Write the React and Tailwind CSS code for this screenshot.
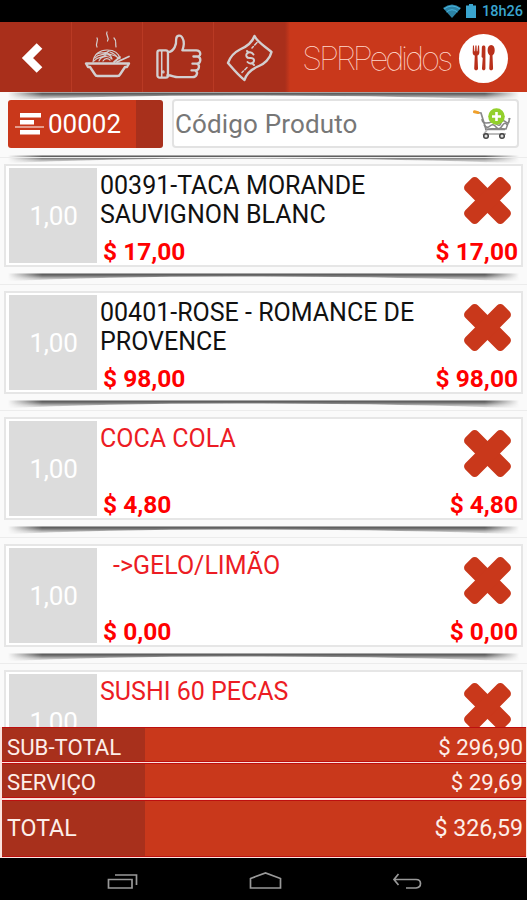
import React from 'react';

const items = [
  { name: '00391-TACA MORANDE SAUVIGNON BLANC', qty: '1,00', price: '$ 17,00', total: '$ 17,00' },
  { name: '00401-ROSE - ROMANCE DE PROVENCE', qty: '1,00', price: '$ 98,00', total: '$ 98,00' },
  { name: 'COCA COLA', qty: '1,00', price: '$ 4,80', total: '$ 4,80', extra: true },
  { name: '->GELO/LIMÃO', qty: '1,00', price: '$ 0,00', total: '$ 0,00', extra: true, child: true },
  { name: 'SUSHI 60 PECAS', qty: '1,00', extra: true },
];

function LiftedShadow({ id }) {
  return (
    <svg className="block h-[10px] w-full shrink-0" viewBox="0 0 527 10" preserveAspectRatio="none">
      <defs>
        <linearGradient id={`${id}-v`} x1="0" y1="0" x2="0" y2="9" gradientUnits="userSpaceOnUse">
          <stop offset="0" stopColor="#333" stopOpacity="0.85" />
          <stop offset="0.25" stopColor="#333" stopOpacity="0.75" />
          <stop offset="0.6" stopColor="#444" stopOpacity="0.35" />
          <stop offset="1" stopColor="#555" stopOpacity="0" />
        </linearGradient>
        <linearGradient id={`${id}-h`}>
          <stop offset="0.015" stopColor="#000" />
          <stop offset="0.08" stopColor="#fff" />
          <stop offset="0.92" stopColor="#fff" />
          <stop offset="0.985" stopColor="#000" />
        </linearGradient>
        <mask id={`${id}-m`}>
          <rect width="527" height="10" fill={`url(#${id}-h)`} />
        </mask>
        <filter id={`${id}-b`} x="-5%" y="-20%" width="110%" height="150%">
          <feGaussianBlur stdDeviation="1 0.6" />
        </filter>
      </defs>
      <g mask={`url(#${id}-m)`}>
        <path d="M5 0.5H522V8.500Q420 4 263 3.500T5 8.500Z" fill={`url(#${id}-v)`} filter={`url(#${id}-b)`} />
      </g>
    </svg>
  );
}

function NoodlesIcon() {
  return (
    <svg className="h-[50px] w-[48px]" viewBox="0 0 48 50" fill="none" stroke="#d3cfd0" strokeLinecap="round" strokeLinejoin="round">
      <g strokeWidth="1.200">
        <path d="M14 9c2 2-2 5 0 9M24 3c-2 3 3 5 .5 9M31 9c3 3 1 5 2 9" />
        <path d="M10 33c1-8 7-12 14-12s12 3 13 9" />
        <path d="M12 29c4-5 8-2 12-5 4 3 8 1 11 5M11 32c4-5 8-3 10-5 4-3 7-1 8 3M16 32c2-5 9-6 13-2M20 32c2-3 5-3 7-1M14 25c5-3 8 1 12-3M27 23c3 1 6 3 8 6" />
      </g>
      <path d="M3 34.500H46L44 38H42L37 45.500Q36.400 47 34.500 47H14.500Q12.600 47 12 45.500L7 38H5Z" strokeWidth="2.400" />
      <path d="M34 33L46 27.500M31 33L37 28" strokeWidth="1.800" />
    </svg>
  );
}

function ThumbIcon() {
  return (
    <svg className="h-[48px] w-[48px]" viewBox="0 0 50 48" fill="none" stroke="#d3cfd0" strokeWidth="2.400" strokeLinecap="round" strokeLinejoin="round">
      <path d="M14 19C20 18 22.500 11 22 6C22 1 27 0 29 5C31 9 30 13 28.500 17H43C48 17 48.500 23 44.500 23.500H40M44.500 23.500C48.500 24.500 48 31 43.500 31H39M43.500 31C47 32 46.500 38 42 38H38M42 38C45.500 40 43.500 45 39 45H24C20 45 18 43 13 43" />
      <rect x="2.500" y="17" width="11" height="28.500" rx="2.200" />
      <path d="M7 18V45" strokeWidth="1.600" />
      <circle cx="8.500" cy="39.500" r="1" strokeWidth="1.200" />
    </svg>
  );
}

function MoneyIcon() {
  return (
    <svg className="h-[48px] w-[48px]" viewBox="0 0 48 48" fill="none" stroke="#d3cfd0" strokeLinecap="round" strokeLinejoin="round">
      <path d="M28.500 2C32 9 39 12 45.500 18C44 25 38 30 33 32C27 34.500 21 38 18.500 46C13 42 8 36 2 29C4 23 9 18 14 15.500C21 12.500 26 9 28.500 2Z" strokeWidth="2.400" />
      <path d="M27.500 20.500C25 16.500 19 18.500 20.500 22.500C22 26 27 22 28 26C28.500 29.500 23.500 30.500 21.500 28M21 17L22.500 18.500M26.500 29.500L28 31" strokeWidth="2" />
      <path d="M26 14L31 8.500M16 38.500L21 33.500" strokeWidth="1.500" strokeDasharray="2 2 4 1" />
    </svg>
  );
}

function Cutlery() {
  return (
    <svg className="h-[28px] w-[23px]" viewBox="0 0 24 28" fill="#b9301b">
      <path d="M1 1h1l.5 6h.7L3.500 1h1.200L5 7h.7L6.300 1h1.100l.3 7c0 2.200-1 3-2 3.500L6.300 25c0 2.500-4 2.500-4 0l.6-13.500C1.600 11 .6 10 .7 8Z" />
      <path d="M10.300 2.500C10.300.5 14 0 14 3V25c0 2.500-3.600 2.500-3.600 0l.8-11-1.200-1Z" />
      <path d="M20 .5c2.500 0 3.700 2.500 3.700 5.500 0 2.800-1 4.500-2.300 5.300L22 25c0 2.500-4 2.500-4 0l.6-13.700C17.300 10.500 16.300 8.800 16.300 6c0-3 1.200-5.500 3.700-5.500Z" />
    </svg>
  );
}

function CartIcon() {
  return (
    <svg className="h-[32px] w-[40px]" viewBox="0 0 40 32" fill="none">
      <path d="M4 4.500L8 5L13 21.500H32" stroke="#8a8a8a" strokeWidth="1.700" />
      <path d="M9 11Q9 15 13 15T18 14T23 16T28 15T33 14T36 10M11 17Q14 21 17 18T23 19T29 18T34 17M12 21.500Q23 20 33 21L37 10" stroke="#858585" strokeWidth="1.500" />
      <path d="M14 22L11 26H33" stroke="#bbb" strokeWidth="1.800" />
      <path d="M1.500 3.800L5 4.600" stroke="#f0a02a" strokeWidth="3" strokeLinecap="round" />
      <circle cx="13" cy="28" r="2.300" fill="#ddd" stroke="#444" strokeWidth="1.500" />
      <circle cx="29" cy="28" r="2.300" fill="#ddd" stroke="#444" strokeWidth="1.500" />
      <circle cx="23.500" cy="8.500" r="8.300" fill="#93d02c" />
      <path d="M23.500 4V13M19 8.500H28" stroke="#fff" strokeWidth="2.600" />
    </svg>
  );
}

function RemoveIcon() {
  return (
    <svg className="h-[47px] w-[47px]" viewBox="0 0 48 48" fill="#c9381b">
      <rect x="-3.500" y="15" width="55" height="18" rx="4.500" transform="rotate(45 24 24)" />
      <rect x="-3.500" y="15" width="55" height="18" rx="4.500" transform="rotate(-45 24 24)" />
    </svg>
  );
}

function OrderItem({ item, index }) {
  return (
    <div className="h-[126.5px] shrink-0 border-t border-[#ececec] pt-[6px]">
      <div className="mx-[4px] flex h-[103px] border-2 border-[#e6e6e6] bg-white py-[2px] pl-[3px] pr-[3px]">
        <div className="flex h-[95px] w-[88px] shrink-0 items-center justify-center bg-[#dcdcdc] pl-px pt-[2px] text-[26px] tracking-[-0.2px] text-white">
          {item.qty}
        </div>
        <div className={item.extra ? 'flex flex-1 flex-col pl-[3px] text-[#ec1c24]' : 'flex flex-1 flex-col pl-[3px] text-[#111]'}>
          <div className="flex h-[69px] shrink-0 justify-between">
            <div className={item.child ? 'w-[330px] pl-[13px] pt-[3px] text-[25px] leading-[29px]' : 'w-[330px] pt-[3px] text-[25px] leading-[29px]'}>
              {item.name}
            </div>
            <div className="mr-[7px] pt-[9px]">
              <RemoveIcon />
            </div>
          </div>
          {item.price && (
            <div className="flex shrink-0 justify-between pl-[3px] text-[24.5px] font-bold leading-[29px] text-[#ff0000]">
              <span>{item.price}</span>
              <span>{item.total}</span>
            </div>
          )}
        </div>
      </div>
      <div className="pt-[6px]">
        <LiftedShadow id={`item${index}`} />
      </div>
    </div>
  );
}

function TotalRow({ label, value, className }) {
  return (
    <div className={`flex items-center justify-between border-y border-[#bd0f0f] bg-linear-to-r from-[#a8301c] from-[143.5px] to-[#c9381b] to-[143.5px] pl-[5px] pr-[3px] leading-[24px] text-[#fdeee9] ${className}`}>
      <span>{label}</span>
      <span>{value}</span>
    </div>
  );
}

export default function App() {
  return (
    <div className="flex h-[900px] w-[527px] flex-col overflow-hidden bg-[#fafafa] font-['Roboto',sans-serif]">
      <div className="flex h-[22px] shrink-0 items-center justify-end bg-black pr-[4px] text-[#3aa5cf]">
        <svg className="h-[14px] w-[18px]" viewBox="0 0 18 14">
          <path d="M0 4Q9-3 18 4L9 14Z" fill="#2c83a6" />
          <path d="M3.500 8Q9 3.500 14.500 8M1 5Q9-1 17 5" fill="none" stroke="#49b5de" strokeWidth="1" />
        </svg>
        <svg className="ml-[5px] h-[14px] w-[10px]" viewBox="0 0 10 14" fill="#3aa5cf">
          <path d="M3 0h4v1.500h3V14H0V1.500h3Z" />
        </svg>
        <span className="ml-[6px] pt-px text-[14.5px] font-medium">18h26</span>
      </div>

      <div className="flex h-[70px] shrink-0 bg-[#c9381b]">
        <div className="flex w-[285px] bg-[#a92f1b]">
          <div className="flex w-[72px] items-center justify-center border-r border-[#b93a24] pr-[5px] pt-[2px]">
            <svg className="h-[34px] w-[24px]" viewBox="0 0 24 34" fill="none">
              <path d="M18.500 5L6.500 17L18.500 29" stroke="#fff" strokeWidth="8" strokeLinejoin="miter" />
            </svg>
          </div>
          <div className="flex w-[71px] items-start justify-center border-r border-[#b93a24] pr-px pt-[7px]"><NoodlesIcon /></div>
          <div className="flex w-[71px] items-start justify-center border-r border-[#b93a24] pl-px pt-[11px]"><ThumbIcon /></div>
          <div className="flex w-[71px] items-start justify-center pt-[12px]"><MoneyIcon /></div>
        </div>
        <div className="flex flex-1 items-center justify-end bg-linear-to-r from-[#a92f1b] from-0% to-[#c9381b] to-[5px] pr-[19px]">
          <span className="mr-[9px] mt-[3px] whitespace-nowrap font-['Inter',sans-serif] text-[33px] font-thin tracking-[-3.2px] text-[#ffd9cc]">SPRPedidos</span>
          <div className="mt-[2px] flex h-[49px] w-[49px] shrink-0 items-center justify-center rounded-full bg-white"><Cutlery /></div>
        </div>
      </div>

      <div className="h-[65px] shrink-0">
        <LiftedShadow id="header" />
        <div className="-mt-[3px] flex h-[49px] gap-[9px] pl-[8px] pr-[8px]">
          <div className="mt-px flex h-[48px] w-[155px] items-center rounded-[3px] bg-linear-to-r from-[#c9381b] from-[128px] to-[#a8301c] to-[128px] pl-[6px] text-[26px] text-white">
            <svg className="mr-[3px] h-[24px] w-[31px]" viewBox="0 0 31 24" fill="#fff">
              <rect x="6" y="1" width="21" height="4.500" />
              <rect x="6" y="8" width="14" height="4.500" />
              <rect x="1" y="14.500" width="29" height="1" />
              <rect x="6" y="18" width="20" height="4.500" />
            </svg>
            <span className="pt-px">00002</span>
          </div>
          <div className="flex flex-1 items-center justify-between rounded-[4px] border-2 border-[#e2e2e2] bg-white pl-px pr-[4px] text-[26px] text-[#777]">
            <span className="pt-[2px] tracking-[0.15px]">Código Produto</span>
            <CartIcon />
          </div>
        </div>
        <div className="pt-[7px]"><LiftedShadow id="search" /></div>
      </div>

      <div className="flex h-[570px] shrink-0 flex-col overflow-hidden">
        {items.map((item, i) => <OrderItem key={item.name} item={item} index={i} />)}
      </div>

      <div className="flex h-[131px] shrink-0 flex-col bg-[#fbe4df] pl-[2px] pr-px">
        <TotalRow label="SUB-TOTAL" value="$ 296,90" className="h-[35px] pt-[5px] text-[22.2px]" />
        <TotalRow label="SERVIÇO" value="$ 29,69" className="mt-px h-[35px] pt-[3px] text-[22.2px]" />
        <TotalRow label="TOTAL" value="$ 326,59" className="mt-[2px] h-[57px] pb-[2px] text-[23.2px]" />
      </div>

      <div className="flex h-[42px] shrink-0 justify-between bg-black pl-[107px] pr-[105px] pt-[13px]">
        <svg className="h-[20px] w-[32px]" viewBox="0 0 32 20" fill="none" stroke="#999" strokeWidth="1.700">
          <path d="M1.500 8.500H25V17H1.500ZM8 4H29.500V14" />
        </svg>
        <svg className="h-[20px] w-[33px]" viewBox="0 0 33 20" fill="none" stroke="#999" strokeWidth="1.700">
          <path d="M1.500 17V7.500L16.500 2L31.500 7.500V17Z" />
        </svg>
        <svg className="h-[20px] w-[30px]" viewBox="0 0 30 20" fill="none" stroke="#999" strokeWidth="1.700">
          <path d="M6.500 3L2 8.500L6.500 14M2 8.500H24Q28.500 8.500 28.500 12.500T24 17H14" />
        </svg>
      </div>
    </div>
  );
}
